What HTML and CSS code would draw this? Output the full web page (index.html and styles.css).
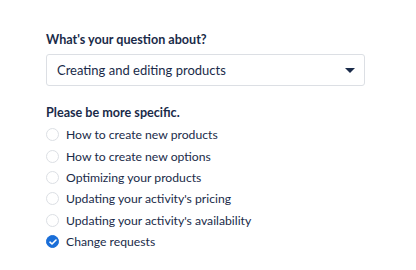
FILE: index.html
```html
<!DOCTYPE html>
<html lang="en">
<head>
    <meta charset="UTF-8">
    <title>Contact form</title>
    <link rel="stylesheet" href="styles.css">
</head>
<body>
    <form class="topic-form">
        <label class="field-label" for="topic">What's your question about?</label>
        <div class="select-box">
            <span class="select-value">Creating and editing products</span>
            <span class="caret"></span>
        </div>

        <p class="field-label specific">Please be more specific.</p>
        <ul class="options">
            <li class="option"><span class="radio"></span>How to create new products</li>
            <li class="option"><span class="radio"></span>How to create new options</li>
            <li class="option"><span class="radio"></span>Optimizing your products</li>
            <li class="option"><span class="radio"></span>Updating your activity's pricing</li>
            <li class="option"><span class="radio"></span>Updating your activity's availability</li>
            <li class="option">
                <span class="radio checked">
                    <svg width="8" height="6" viewBox="0 0 8 6"><path d="M1 3.2 L3 5 L7 1" fill="none" stroke="#fff" stroke-width="1.6" stroke-linecap="round" stroke-linejoin="round"/></svg>
                </span>Change requests
            </li>
        </ul>
    </form>
</body>
</html>
```

FILE: styles.css
```css
body {
    margin: 0;
    background: #fff;
    font-family: Lato, "Noto Sans", sans-serif;
    color: #1a2b49;
    font-size: 13px;
}
.topic-form {
    width: 319px;
    padding: 32px 0 0 46px;
}
.field-label {
    display: block;
    font-weight: bold;
    font-size: 12.6px;
    line-height: 16px;
    margin: 0 0 6px;
}
.select-box {
    display: flex;
    align-items: center;
    justify-content: space-between;
    height: 30px;
    padding: 0 9px 0 10px;
    border: 1px solid #dcdfe4;
    border-radius: 3px;
    font-size: 13px;
}
.caret {
    width: 0;
    height: 0;
    border-left: 5px solid transparent;
    border-right: 5px solid transparent;
    border-top: 5px solid #1a2b49;
}
.specific {
    margin-top: 19px;
    margin-bottom: 3px;
}
.options {
    list-style: none;
    margin: 0;
    padding: 0;
    font-size: 12.2px;
}
.option {
    display: flex;
    align-items: center;
    height: 21.4px;
}
.radio {
    box-sizing: border-box;
    width: 13px;
    height: 13px;
    margin-right: 7px;
    border: 1px solid #dcdfe4;
    border-radius: 50%;
    display: flex;
    align-items: center;
    justify-content: center;
}
.radio.checked {
    background: #1a6ed8;
    border-color: #1a6ed8;
}
```
